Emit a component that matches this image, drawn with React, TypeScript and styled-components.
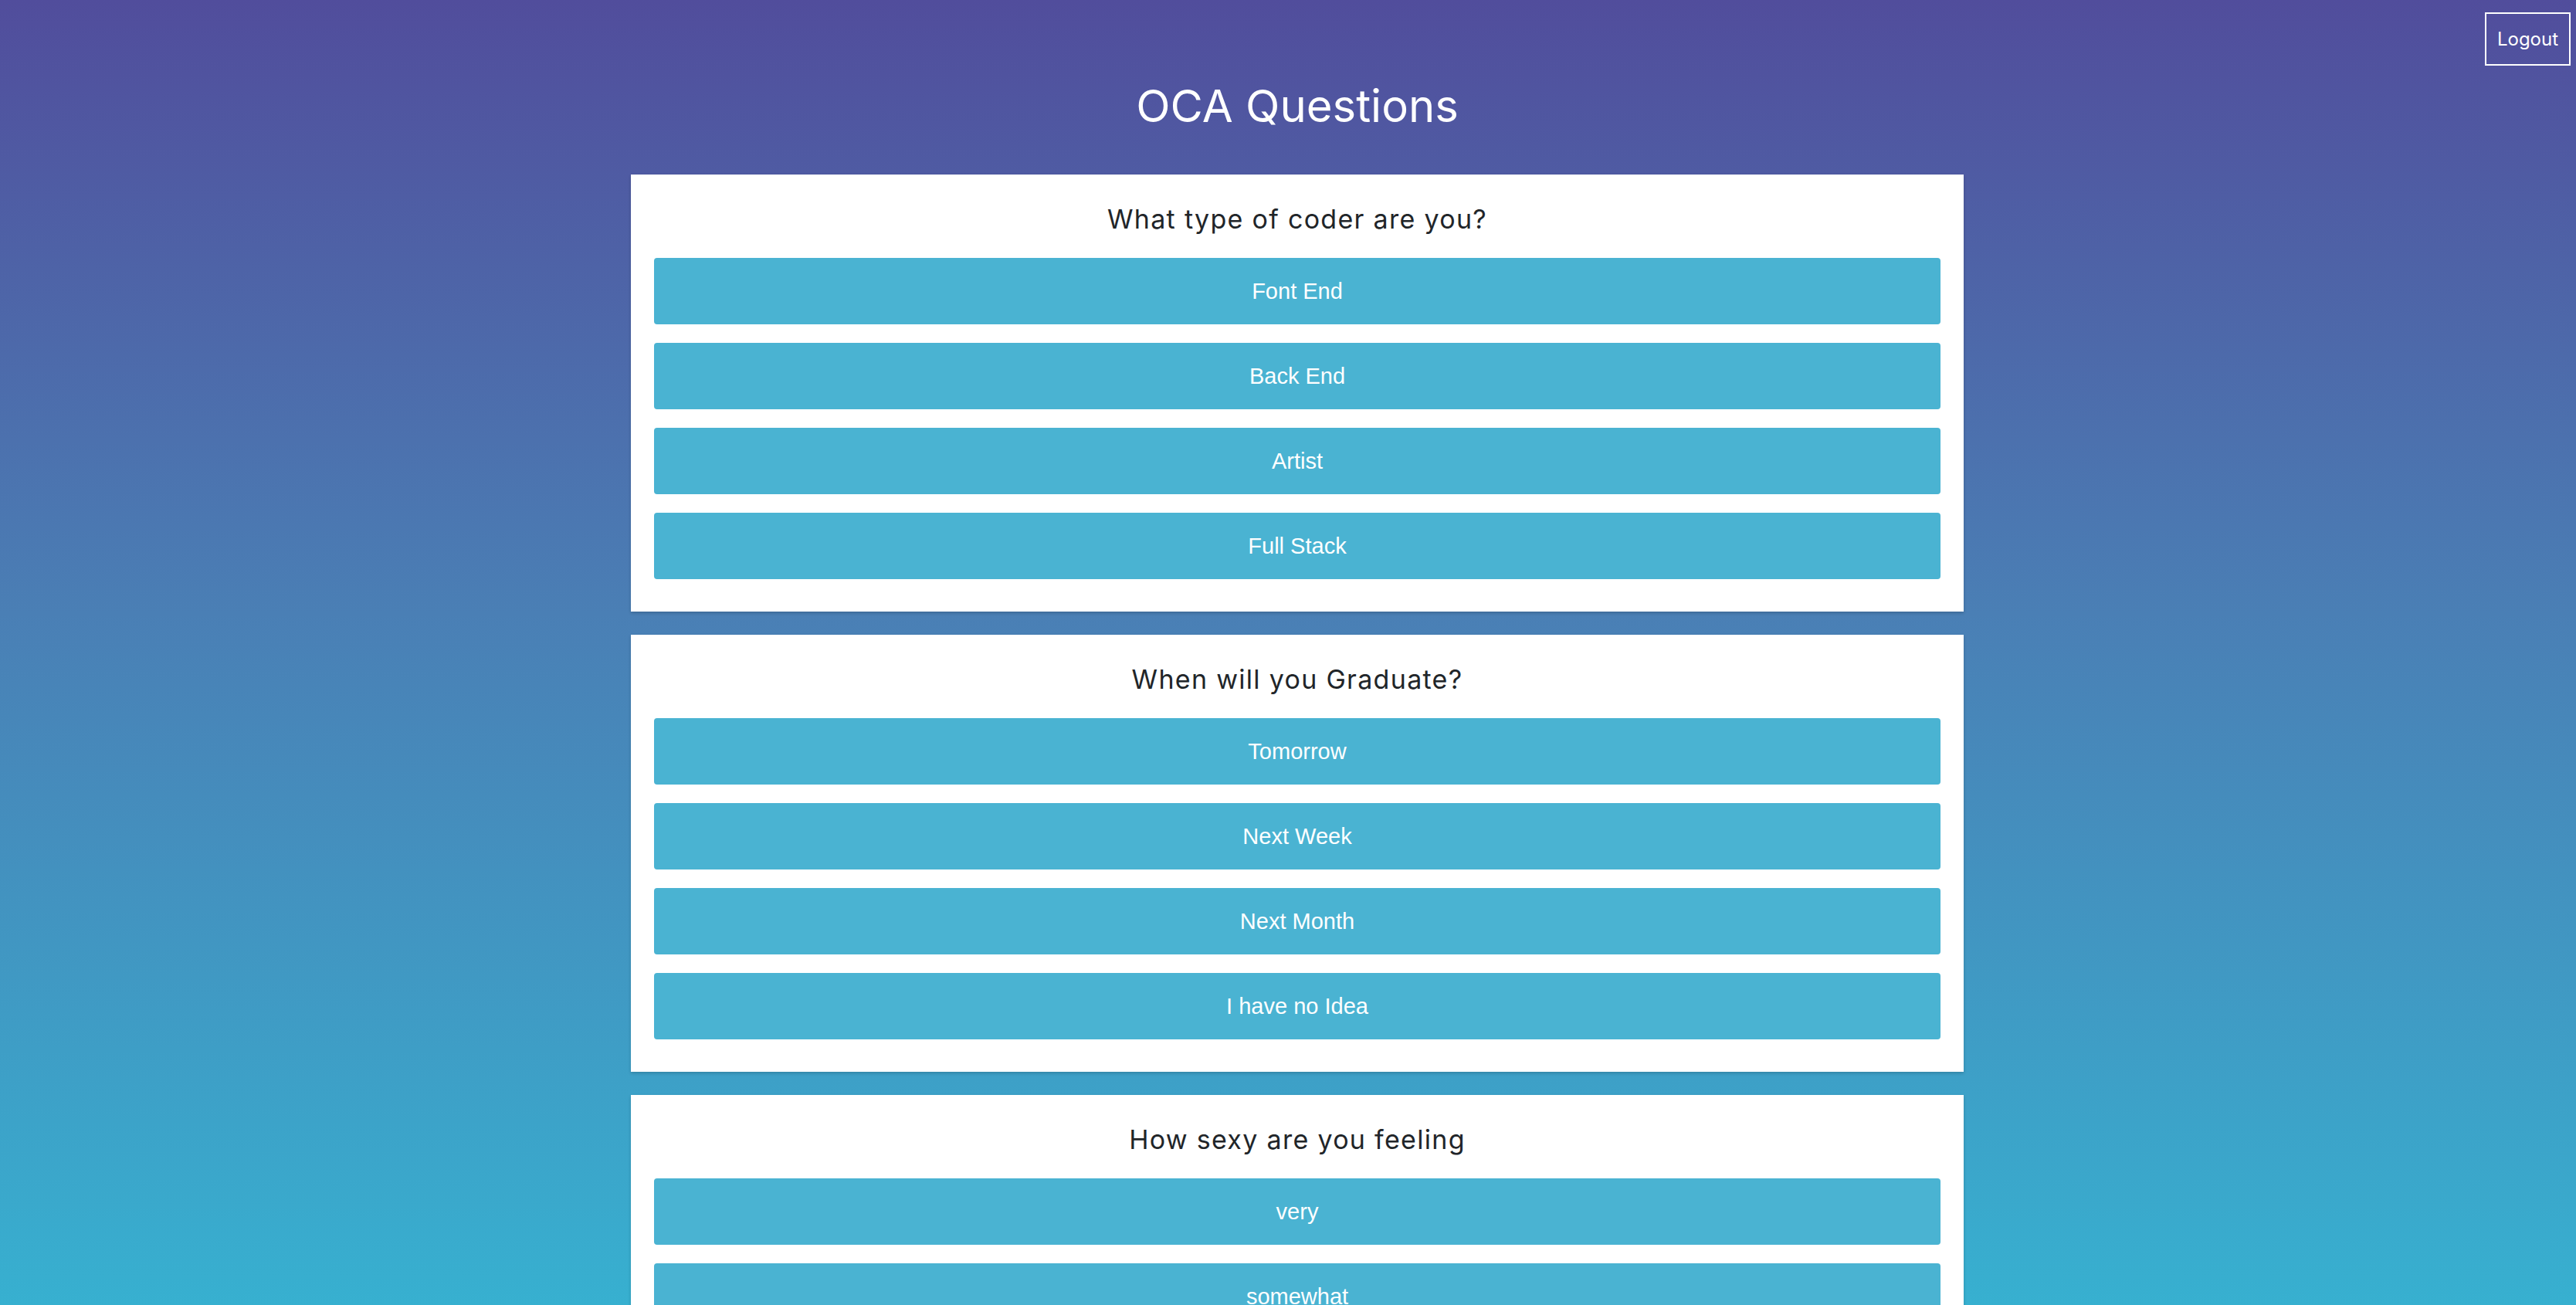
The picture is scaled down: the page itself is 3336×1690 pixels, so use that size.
import React from "react";
import styled, { createGlobalStyle } from "styled-components";

const GlobalStyle = createGlobalStyle`
  html, body {
    margin: 0;
    padding: 0;
  }
  body {
    background: linear-gradient(to bottom, #514d9c 0%, #4a7fb5 47%, #37b0d0 100%) fixed;
    min-height: 100vh;
    font-family: Inter, "Noto Sans", sans-serif;
  }
`;

const Page = styled.div`
  position: relative;
  display: flex;
  flex-direction: column;
  align-items: center;
  padding: 100px 0 30px 24px;
`;

const Title = styled.h1`
  margin: 0 0 52px;
  font-family: Inter, sans-serif;
  font-weight: 400;
  font-size: 58px;
  line-height: 74px;
  color: #ffffff;
`;

const LogoutButton = styled.button`
  position: absolute;
  top: 16px;
  right: 7px;
  width: 111px;
  height: 69px;
  border: 2px solid #ffffff;
  background: transparent;
  color: #ffffff;
  font-family: Inter, sans-serif;
  font-size: 24px;
  padding: 0;
  cursor: pointer;
`;

const CardList = styled.div`
  display: flex;
  flex-direction: column;
  gap: 30px;
  width: 1726px;
`;

const Card = styled.section`
  background: #ffffff;
  padding: 38px 30px 42px;
  box-shadow: 0 2px 4px rgba(0, 0, 0, 0.18);
  display: flex;
  flex-direction: column;
`;

const Question = styled.h3`
  margin: 0 0 30px;
  text-align: center;
  font-family: Inter, sans-serif;
  font-weight: 400;
  font-size: 34px;
  letter-spacing: 1.3px;
  line-height: 40px;
  color: #212529;
`;

const Options = styled.div`
  display: flex;
  flex-direction: column;
  gap: 24px;
`;

const OptionButton = styled.button`
  height: 86px;
  border: none;
  border-radius: 4px;
  background: #4ab3d2;
  color: #ffffff;
  font-family: "Liberation Sans", Arial, sans-serif;
  font-size: 29px;
  cursor: pointer;
  padding: 0;
`;

const questions = [
  {
    q: "What type of coder are you?",
    options: ["Font End", "Back End", "Artist", "Full Stack"],
  },
  {
    q: "When will you Graduate?",
    options: ["Tomorrow", "Next Week", "Next Month", "I have no Idea"],
  },
  {
    q: "How sexy are you feeling",
    options: ["very", "somewhat", "a little", "not at all"],
  },
];

export default function App() {
  return (
    <>
      <GlobalStyle />
      <Page>
        <LogoutButton>Logout</LogoutButton>
        <Title>OCA Questions</Title>
        <CardList>
          {questions.map((item) => (
            <Card key={item.q}>
              <Question>{item.q}</Question>
              <Options>
                {item.options.map((o) => (
                  <OptionButton key={o}>{o}</OptionButton>
                ))}
              </Options>
            </Card>
          ))}
        </CardList>
      </Page>
    </>
  );
}
